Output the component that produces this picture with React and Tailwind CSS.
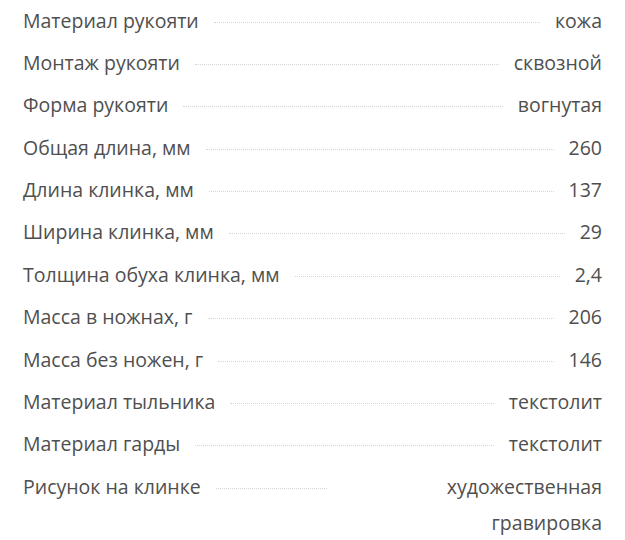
const specs = [
  ["Материал рукояти", "кожа"],
  ["Монтаж рукояти", "сквозной"],
  ["Форма рукояти", "вогнутая"],
  ["Общая длина, мм", "260"],
  ["Длина клинка, мм", "137"],
  ["Ширина клинка, мм", "29"],
  ["Толщина обуха клинка, мм", "2,4"],
  ["Масса в ножнах, г", "206"],
  ["Масса без ножен, г", "146"],
  ["Материал тыльника", "текстолит"],
  ["Материал гарды", "текстолит"],
];

function SpecRow({ label, children, wide }) {
  return (
    <div className="flex items-start">
      <span className="shrink-0 leading-[36px]">{label}</span>
      <span className="flex-1 mx-[15px] mt-[19px] border-t border-dotted border-[#d6d6d6]" />
      <span className={wide ? "w-[260px] shrink-0 text-right leading-[36px]" : "shrink-0 text-right leading-[36px]"}>
        {children}
      </span>
    </div>
  );
}

export default function App() {
  return (
    <div
      className="w-[625px] h-[540px] overflow-hidden bg-white text-[#4f4f4f] text-[19.5px]"
      style={{ fontFamily: '"Open Sans", "Noto Sans", sans-serif' }}
    >
      <div className="flex flex-col gap-[6.4px] pt-[2.5px] pl-[23px] pr-[23px]">
        {specs.map(([label, value]) => (
          <SpecRow key={label} label={label}>
            {value}
          </SpecRow>
        ))}
        <SpecRow label="Рисунок на клинке" wide>
          художественная гравировка
        </SpecRow>
      </div>
    </div>
  );
}
